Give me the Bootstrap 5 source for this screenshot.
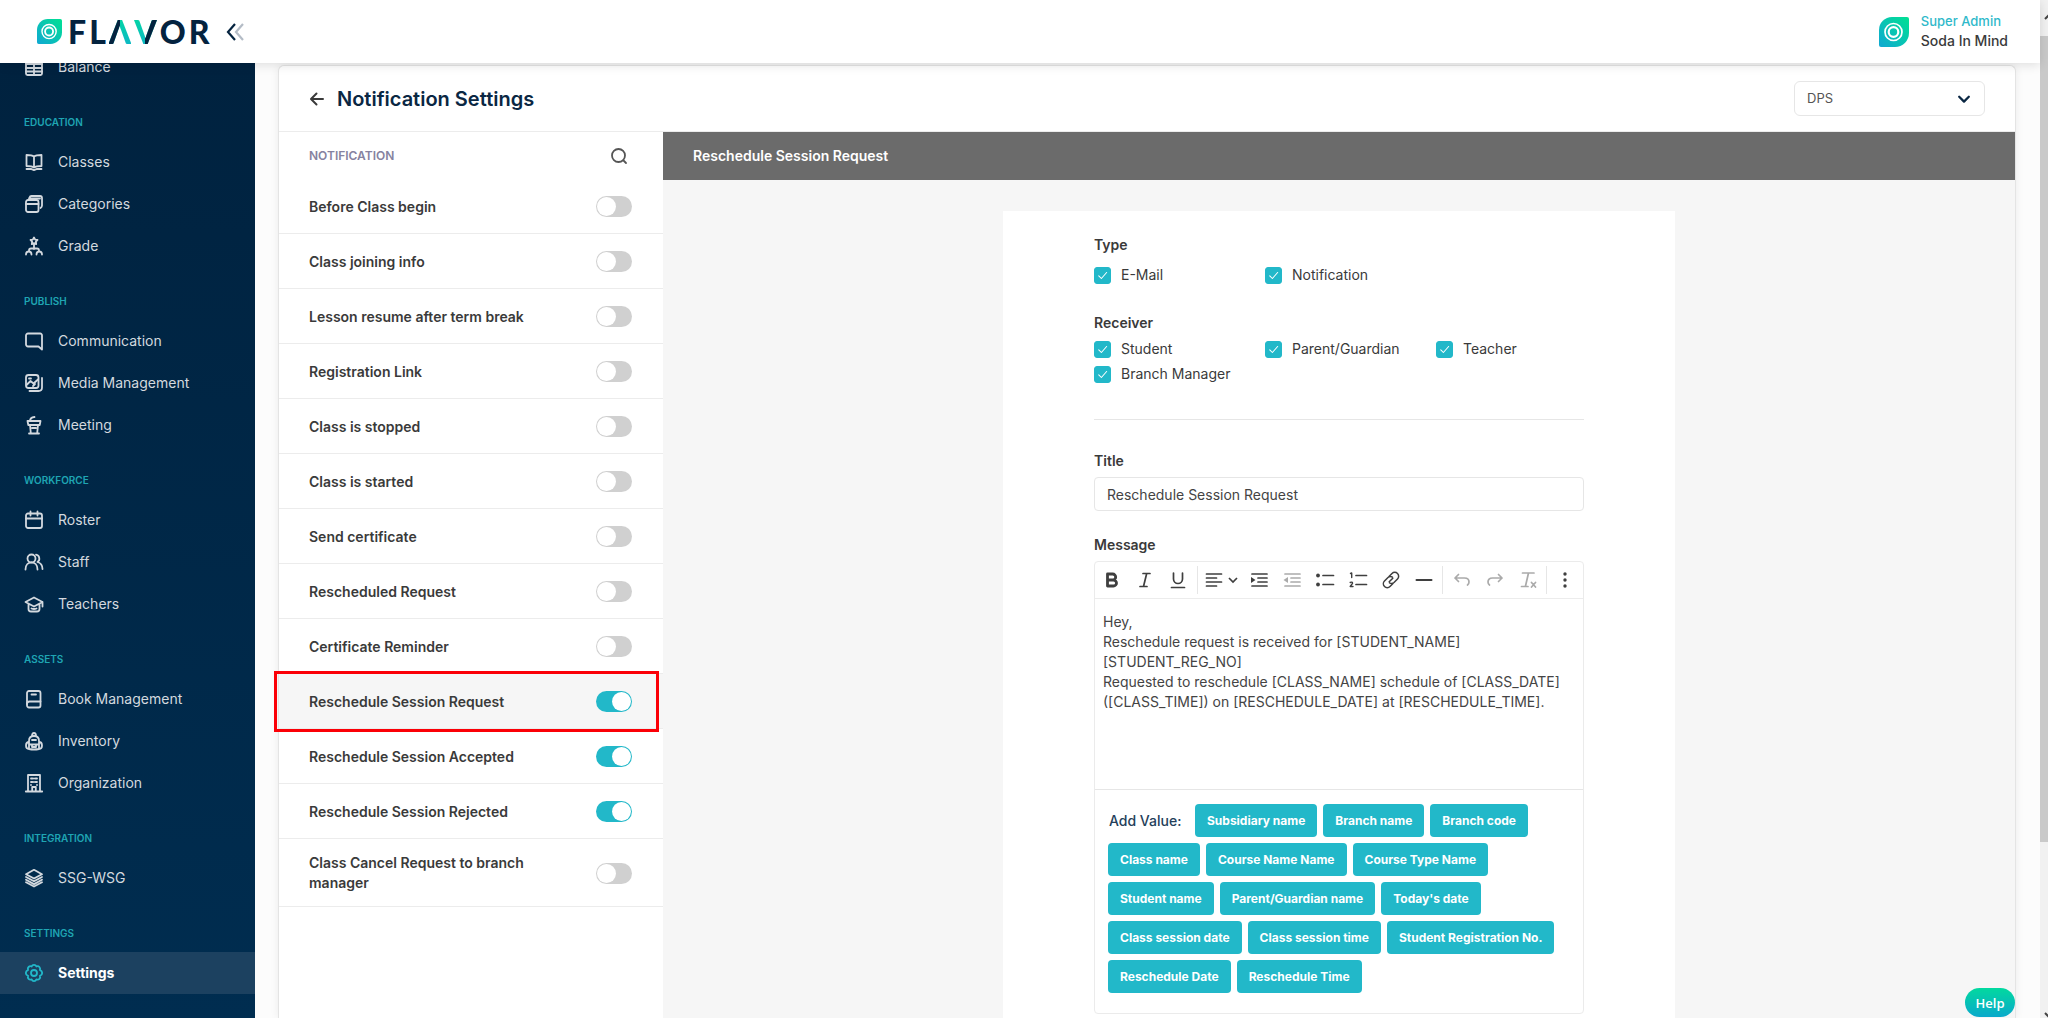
<!DOCTYPE html>
<html lang="en">
<head>
<meta charset="utf-8">
<meta name="viewport" content="width=device-width, initial-scale=1">
<title>Notification Settings</title>
<link href="https://cdn.jsdelivr.net/npm/bootstrap@5.3.0/dist/css/bootstrap.min.css" rel="stylesheet">
<style>
  :root { --teal: #22b8c9; --navy: #0a2743; --ink: #3a3a3a; --line: #ececec; }
  body { font-family: Inter, "Open Sans", sans-serif; font-size: 14px; line-height: 20px; color: var(--ink); background: #fcfcfc; }
  svg.ico { width: 20px; height: 20px; fill: none; stroke: currentColor; stroke-width: 1.8; stroke-linecap: round; stroke-linejoin: round; flex: none; }
  .pane-root { min-width: 0; min-height: 0; }

  .topbar { height: 63px; background: #fff; padding: 0 32px 0 37px; box-shadow: 0 2px 10px rgba(0,0,0,.12); z-index: 5; flex: none; }
  .brand { gap: 6px; text-decoration: none; }
  .brand-word { font-family: Lato, sans-serif; font-weight: 900; font-size: 32px; line-height: 40px; color: #04233f; gap: 3px; }
  .duo { color: transparent; -webkit-background-clip: text; background-clip: text; }
  .duo-a { background-image: linear-gradient(90deg, #04233f 50%, transparent 50%), linear-gradient(#00dc9c, #10b0cd); }
  .duo-v { background-image: linear-gradient(90deg, transparent 50%, #04233f 50%), linear-gradient(#00dc9c, #10b0cd); }
  .who-box { padding-bottom: 2px; }
  .role { color: #2fb9ca; font-size: 13px; font-weight: 500; }
  .who { font-weight: 500; }

  .side { width: 255px; flex: none; background: linear-gradient(#00223f, #002d50); overflow: hidden; }
  .side-list { margin-top: -17px; }
  .side-head { height: 53px; padding: 24px 24px 0; font-size: 10px; line-height: 20px; font-weight: 600; color: #1fa5b3; text-transform: uppercase; }
  .side-link { height: 42px; padding: 0 24px; gap: 14px; color: #d3d9df; text-decoration: none; }
  .side-link.active { background: #1c4160; color: #fff; font-weight: 700; }
  .side-link.active svg { color: var(--teal); }

  .work { padding: 2px 24px 0 23px; }
  .sheet { background: #fff; border: 1px solid #e4e4e4; border-bottom: 0; border-radius: 6px 6px 0 0; box-shadow: 0 0 8px rgba(0,0,0,.07); }
  .sheet-head { height: 66px; padding: 0 30px; border-bottom: 1px solid var(--line); flex: none; }
  .sheet-head h1 { font-size: 20px; line-height: 28px; font-weight: 600; color: var(--navy); }
  .branch-pick { width: 191px; height: 35px; padding: 0 36px 0 12px; font-size: 13px; color: #555; border-color: #e6e6e6;
    background-position: right 13px center; background-size: 14px;
    background-image: url("data:image/svg+xml,%3csvg xmlns='http://www.w3.org/2000/svg' viewBox='0 0 16 16'%3e%3cpath fill='none' stroke='%230a2743' stroke-width='2.6' stroke-linecap='round' stroke-linejoin='round' d='M2.5 5.5l5.5 5.5 5.5-5.5'/%3e%3c/svg%3e"); }

  .notes { width: 384px; flex: none; }
  .notes-head { height: 47px; padding: 0 34px 0 30px; color: #8682a0; font-size: 12px; font-weight: 600; }
  .note { min-height: 55px; padding: 14px 31px 13px 30px; border-bottom: 1px solid var(--line); font-weight: 600; }
  .note.active { background: #f6f6f6; position: relative; }
  .note.active::after { content: ""; position: absolute; inset: -3px 4px -4px -5px; border: 3px solid #fb0007; }
  .note label { width: 230px; }
  .note .form-check-input { width: 36px; height: 21px; margin: 0; flex: none; border: 0; border-radius: 11px; background-color: #d0d0d0; background-size: 21px 21px;
    background-image: url("data:image/svg+xml,%3csvg xmlns='http://www.w3.org/2000/svg' viewBox='0 0 20 20'%3e%3ccircle cx='10' cy='10' r='9' fill='%23fff'/%3e%3c/svg%3e"); }
  .note .form-check-input:checked { background-color: var(--teal);
    background-image: url("data:image/svg+xml,%3csvg xmlns='http://www.w3.org/2000/svg' viewBox='0 0 20 20'%3e%3ccircle cx='10' cy='10' r='9' fill='%23fff'/%3e%3c/svg%3e"); }

  .detail { background: #f6f6f6; }
  .detail-head { height: 48px; padding: 0 30px; background: #6b6b6b; color: #fff; font-weight: 600; font-size: 14px; line-height: 20px; }
  .paper { width: 672px; max-width: 100%; margin-top: 31px; padding: 24px 91px; background: #fff; }
  .field-name { font-size: 14px; line-height: 20px; font-weight: 600; margin: 0 0 6px; }
  .ticks .form-check { width: 171px; min-height: 0; padding: 0; gap: 10px; margin: 0; white-space: nowrap; }
  .ticks .form-check-input { width: 17px; height: 17px; margin: 0; border-radius: 3px; flex: none; }
  .ticks .form-check-input:checked { background-color: var(--teal); border-color: var(--teal);
    background-image: url("data:image/svg+xml,%3csvg xmlns='http://www.w3.org/2000/svg' viewBox='0 0 20 20'%3e%3cpath fill='none' stroke='%23fff' stroke-width='1.4' stroke-linecap='round' stroke-linejoin='round' d='M5 10.5l3.5 3.5 7-8'/%3e%3c/svg%3e"); }
  .ticks { row-gap: 5px; margin-right: -30px; }
  .rule { border-top: 1px solid #e6e6e6; margin: 35px 0 31px; }
  .title-box { height: 34px; padding: 0 12px; font-size: 14px; color: #444; border-color: #e6e6e6; border-radius: 4px; }
  .editor { border: 1px solid #ebebeb; border-radius: 4px; }
  .tools { height: 37px; border-bottom: 1px solid var(--line); padding: 0 1px; }
  .tool { width: 33px; height: 34px; padding: 0; border: 0; background: none; color: #3f3f3f; display: flex; align-items: center; justify-content: center; }
  .tool.wide { width: 43px; gap: 4px; }
  .tool:disabled { color: #aaa; }
  .tool svg { stroke-width: 1.7; }
  .bar { width: 1px; height: 28px; background: #e6e6e6; margin: 0 2px; }
  .msg { height: 191px; padding: 13px 8px; border: 0; border-bottom: 1px solid #e6e6e6; border-radius: 0; font-size: 14px; line-height: 20px; color: #444; resize: none; overflow: hidden; }
  .values { gap: 6px; padding: 14px 13px 20px; }
  .values-name { font-size: 14px; line-height: 20px; font-weight: 500; color: #24405a; width: 81px; padding-left: 1px; }
  .btn-val { height: 33px; padding: 0 12px; background: var(--teal); color: #fff; font-size: 12px; line-height: 20px; font-weight: 700; border: 0; border-radius: 4px; }

  .help { position: fixed; right: 33px; bottom: 1px; width: 50px; height: 29px; padding: 0; border: 0; border-radius: 15px; background: linear-gradient(#02d99f, #0aa9cb); color: #fff; font-family: "Open Sans", sans-serif; font-size: 13px; font-weight: 600; z-index: 6; }
  .scroll-rail { width: 8px; flex: none; background: #f1f1f1; overflow: hidden; }
  .scroll-end { height: 36px; padding-top: 5px; }
  .scroll-grip { height: 806px; background: #c9c9c9; }
</style>
<script src="https://cdn.jsdelivr.net/npm/bootstrap@5.3.0/dist/js/bootstrap.bundle.min.js"></script>
</head>
<body class="vh-100 d-flex overflow-hidden">

<svg width="0" height="0" class="position-absolute" aria-hidden="true">
  <defs>
    <linearGradient id="leaf" x1="1" y1="0" x2="0" y2="1"><stop offset="0" stop-color="#00e192"/><stop offset="1" stop-color="#10a8d3"/></linearGradient>
    <symbol id="i-mark" viewBox="0 0 30 30"><path fill="url(#leaf)" stroke="none" d="M13 0H28a2 2 0 0 1 2 2V16A14 14 0 0 1 16 30H2a2 2 0 0 1-2-2V13A13 13 0 0 1 13 0z"/><circle cx="14.500" cy="15" r="8.500" fill="none" stroke="#fff" stroke-width="1.700"/><circle cx="14.500" cy="15" r="4.800" fill="none" stroke="#fff" stroke-width="2.200"/></symbol>
    <symbol id="i-table" viewBox="0 0 20 20"><rect x="2" y="2" width="16" height="16" rx="1.500"/><path d="M2 7h16M2 11h16M2 14.500h16M10 7v11"/></symbol>
    <symbol id="i-book" viewBox="0 0 20 20"><path d="M10 4.500C8 3 5 3 2.500 3v11c2.500 0 5.500 0 7.500 1.500 2-1.500 5-1.500 7.500-1.500V3C15 3 12 3 10 4.500zM10 4.500v11M2.500 17H7c1.500 0 1.500 1 3 1s1.500-1 3-1h4.500"/></symbol>
    <symbol id="i-stack" viewBox="0 0 20 20"><rect x="2" y="6" width="12.500" height="12" rx="2"/><path d="M2 10h12.500M5 6l.5-2.500Q6 2 7.500 2H16q2 0 2 2v7.500q0 1.500-1.500 2.500M5 4.500h11"/></symbol>
    <symbol id="i-grade" viewBox="0 0 20 20"><path d="M10 1.500l1.200 2.100 2.300.4-1.600 1.700.3 2.400L10 7.100l-2.200 1 .3-2.400L6.500 4l2.300-.4zM10 8.500V13M5 14.500c0-1.500 1-2 2-2h6c1 0 2 .5 2 2M2 18.500c0-4 5.500-4 5.500 0M12.500 18.500c0-4 5.500-4 5.500 0"/></symbol>
    <symbol id="i-chat" viewBox="0 0 20 20"><path d="M4 2.500h12A1.800 1.800 0 0 1 18 4.500V18.500l-3.500-3H4a2 2 0 0 1-2-2v-9a2 2 0 0 1 2-2z"/></symbol>
    <symbol id="i-media" viewBox="0 0 20 20"><rect x="2" y="2" width="12.500" height="13" rx="2.500"/><path d="M2.500 12l4-4 3 2.500L14 6.500M5 5.500h2M9 13l2-2M18 5v9.500q0 3.500-3.500 3.500H5.500"/></symbol>
    <symbol id="i-meet" viewBox="0 0 20 20"><path d="M3.500 6h13l-.8 4H4.300zM6 10l.8 8M14 10l-.8 8M5 18.500h10M6 6q0-3.500 4.500-4M8 13h4"/></symbol>
    <symbol id="i-cal" viewBox="0 0 20 20"><rect x="2" y="3.500" width="16" height="14.500" rx="2"/><path d="M2 8.500h16M6.500 1.500v4M13.500 1.500v4"/></symbol>
    <symbol id="i-staff" viewBox="0 0 20 20"><circle cx="7.500" cy="6.500" r="4"/><path d="M1.500 17.500c0-9.500 12-9.500 12 0M12 2.700a4 4 0 0 1 1.500 7.300q5 1.500 5 7"/></symbol>
    <symbol id="i-cap" viewBox="0 0 20 20"><path d="M1.500 8L10 3.500 18.500 8 10 12.500zM4.500 10v5Q4.500 17.500 7 17.500h6q2.500 0 2.500-2.500v-5M18.500 8v4.500M7.500 14.500q2.500 1 5 0"/></symbol>
    <symbol id="i-bookm" viewBox="0 0 20 20"><rect x="3" y="2" width="13.500" height="16.500" rx="2"/><path d="M3 15q0-2.500 2.500-2.500h11M7.500 5.500h4.500"/></symbol>
    <symbol id="i-bag" viewBox="0 0 20 20"><path d="M5 18V10Q5 5 10 5t5 5v8q-5 1-10 0zM8 5q0-3 2-3t2 3M5 11q-3 0-3 3.500T5 18M15 11q3 0 3 3.500T15 18M5 13.500h10M8 9h4M8 13.500V16h4v-2.500"/></symbol>
    <symbol id="i-org" viewBox="0 0 20 20"><path d="M4 18.500V2h12v16.500M1.800 18.500h16.400M8.200 18.500v-4.500h3.600v4.500M7 5.500h1.500M11.500 5.500H13M7 9h1.500M11.500 9H13M10 5.500v0M10 9v0M7 12v0M13 12v0"/></symbol>
    <symbol id="i-layers" viewBox="0 0 20 20"><path d="M10 1.800L18 6.200 10 10.500 2 6.200zM2 9l8 4.300L18 9M2 11.800l8 4.300 8-4.300M2 14.300l8 4.200 8-4.200"/></symbol>
    <symbol id="i-gear" viewBox="0 0 20 20"><path d="M10 1.800q1.700 0 2.400 1.700 1.800-.8 3 .5t.5 2.900Q18.200 8 18.200 10t-2.300 2.900q.8 1.700-.5 3t-3 .5Q11.700 18.200 10 18.200t-2.400-1.800q-1.800.8-3-.5t-.5-3Q1.800 12 1.800 10t2.300-3.100q-.8-1.600.5-2.900t3-.5Q8.300 1.800 10 1.800z"/><circle cx="10" cy="10" r="3"/></symbol>
  </defs>
</svg>

<div class="pane-root flex-grow-1 d-flex flex-column">
  <header class="topbar d-flex align-items-center justify-content-between position-relative">
    <div class="d-flex align-items-center gap-3">
      <a href="#" class="brand d-flex align-items-center" aria-label="Flavor">
        <svg width="25" height="25"><use href="#i-mark"/></svg>
        <span class="brand-word d-flex"><span>F</span><span>L</span><span class="duo duo-a">Λ</span><span class="duo duo-v">V</span><span>O</span><span>R</span></span>
      </a>
      <button class="btn p-0 border-0 d-flex" aria-label="Collapse menu">
        <svg width="20" height="20" viewBox="0 0 20 20" fill="none" stroke-width="2.200"><path d="M10 2L3 10l7 8" stroke="#04233f"/><path d="M18 2l-7 8 7 8" stroke="#b4bcc6"/></svg>
      </button>
    </div>
    <div class="d-flex align-items-center gap-2">
      <svg width="30" height="30"><use href="#i-mark"/></svg>
      <div class="who-box ms-1"><div class="role">Super Admin</div><div class="who">Soda In Mind</div></div>
    </div>
  </header>

  <div class="pane-root d-flex flex-grow-1">
    <nav class="side" aria-label="Main">
      <div class="side-list">
        <a href="#" class="side-link d-flex align-items-center"><svg class="ico"><use href="#i-table"/></svg>Balance</a>
        <div class="side-head">Education</div>
        <a href="#" class="side-link d-flex align-items-center"><svg class="ico"><use href="#i-book"/></svg>Classes</a>
        <a href="#" class="side-link d-flex align-items-center"><svg class="ico"><use href="#i-stack"/></svg>Categories</a>
        <a href="#" class="side-link d-flex align-items-center"><svg class="ico"><use href="#i-grade"/></svg>Grade</a>
        <div class="side-head">Publish</div>
        <a href="#" class="side-link d-flex align-items-center"><svg class="ico"><use href="#i-chat"/></svg>Communication</a>
        <a href="#" class="side-link d-flex align-items-center"><svg class="ico"><use href="#i-media"/></svg>Media Management</a>
        <a href="#" class="side-link d-flex align-items-center"><svg class="ico"><use href="#i-meet"/></svg>Meeting</a>
        <div class="side-head">Workforce</div>
        <a href="#" class="side-link d-flex align-items-center"><svg class="ico"><use href="#i-cal"/></svg>Roster</a>
        <a href="#" class="side-link d-flex align-items-center"><svg class="ico"><use href="#i-staff"/></svg>Staff</a>
        <a href="#" class="side-link d-flex align-items-center"><svg class="ico"><use href="#i-cap"/></svg>Teachers</a>
        <div class="side-head">Assets</div>
        <a href="#" class="side-link d-flex align-items-center"><svg class="ico"><use href="#i-bookm"/></svg>Book Management</a>
        <a href="#" class="side-link d-flex align-items-center"><svg class="ico"><use href="#i-bag"/></svg>Inventory</a>
        <a href="#" class="side-link d-flex align-items-center"><svg class="ico"><use href="#i-org"/></svg>Organization</a>
        <div class="side-head">Integration</div>
        <a href="#" class="side-link d-flex align-items-center"><svg class="ico"><use href="#i-layers"/></svg>SSG-WSG</a>
        <div class="side-head">Settings</div>
        <a href="#" class="side-link active d-flex align-items-center" aria-current="page"><svg class="ico"><use href="#i-gear"/></svg>Settings</a>
      </div>
    </nav>

    <main class="work pane-root flex-grow-1 d-flex">
      <div class="sheet pane-root flex-grow-1 d-flex flex-column">
        <div class="sheet-head d-flex align-items-center justify-content-between">
          <div class="d-flex align-items-center gap-2">
            <button class="btn p-0 border-0 d-flex" aria-label="Back"><svg width="16" height="16" viewBox="0 0 16 16" fill="none" stroke="#3a3a3a" stroke-width="2" stroke-linecap="round" stroke-linejoin="round"><path d="M14 8H2.500M7.500 2.500L2 8l5.500 5.500"/></svg></button>
            <h1 class="m-0 ps-1">Notification Settings</h1>
          </div>
          <select class="form-select branch-pick" aria-label="Branch"><option>DPS</option></select>
        </div>
        <div class="pane-root d-flex flex-grow-1">
          <section class="notes">
            <div class="notes-head d-flex align-items-center justify-content-between">
              <span>NOTIFICATION</span>
              <button class="btn p-0 border-0 d-flex" aria-label="Search"><svg width="20" height="20" viewBox="0 0 20 20" fill="none" stroke="#555" stroke-width="1.800" stroke-linecap="round"><circle cx="9.500" cy="9.500" r="6.500"/><path d="M14.500 14.500L17 17"/></svg></button>
            </div>
            <div class="note d-flex align-items-center justify-content-between form-switch"><label for="n1">Before Class begin</label><input class="form-check-input" type="checkbox" role="switch" id="n1"></div>
            <div class="note d-flex align-items-center justify-content-between form-switch"><label for="n2">Class joining info</label><input class="form-check-input" type="checkbox" role="switch" id="n2"></div>
            <div class="note d-flex align-items-center justify-content-between form-switch"><label for="n3">Lesson resume after term break</label><input class="form-check-input" type="checkbox" role="switch" id="n3"></div>
            <div class="note d-flex align-items-center justify-content-between form-switch"><label for="n4">Registration Link</label><input class="form-check-input" type="checkbox" role="switch" id="n4"></div>
            <div class="note d-flex align-items-center justify-content-between form-switch"><label for="n5">Class is stopped</label><input class="form-check-input" type="checkbox" role="switch" id="n5"></div>
            <div class="note d-flex align-items-center justify-content-between form-switch"><label for="n6">Class is started</label><input class="form-check-input" type="checkbox" role="switch" id="n6"></div>
            <div class="note d-flex align-items-center justify-content-between form-switch"><label for="n7">Send certificate</label><input class="form-check-input" type="checkbox" role="switch" id="n7"></div>
            <div class="note d-flex align-items-center justify-content-between form-switch"><label for="n8">Rescheduled Request</label><input class="form-check-input" type="checkbox" role="switch" id="n8"></div>
            <div class="note d-flex align-items-center justify-content-between form-switch"><label for="n9">Certificate Reminder</label><input class="form-check-input" type="checkbox" role="switch" id="n9"></div>
            <div class="note active d-flex align-items-center justify-content-between form-switch"><label for="n10">Reschedule Session Request</label><input class="form-check-input" type="checkbox" role="switch" id="n10" checked></div>
            <div class="note d-flex align-items-center justify-content-between form-switch"><label for="n11">Reschedule Session Accepted</label><input class="form-check-input" type="checkbox" role="switch" id="n11" checked></div>
            <div class="note d-flex align-items-center justify-content-between form-switch"><label for="n12">Reschedule Session Rejected</label><input class="form-check-input" type="checkbox" role="switch" id="n12" checked></div>
            <div class="note d-flex align-items-center justify-content-between form-switch"><label for="n13">Class Cancel Request to branch manager</label><input class="form-check-input" type="checkbox" role="switch" id="n13"></div>
          </section>

          <section class="detail pane-root flex-grow-1 overflow-hidden">
            <h2 class="detail-head d-flex align-items-center m-0">Reschedule Session Request</h2>
            <form class="paper mx-auto">
              <p class="field-name">Type</p>
              <div class="ticks d-flex flex-wrap pt-1 mb-4">
                <div class="form-check d-flex align-items-center"><input class="form-check-input" type="checkbox" id="t1" checked><label for="t1">E-Mail</label></div>
                <div class="form-check d-flex align-items-center"><input class="form-check-input" type="checkbox" id="t2" checked><label for="t2">Notification</label></div>
              </div>
              <p class="field-name pt-1">Receiver</p>
              <div class="ticks d-flex flex-wrap">
                <div class="form-check d-flex align-items-center"><input class="form-check-input" type="checkbox" id="r1" checked><label for="r1">Student</label></div>
                <div class="form-check d-flex align-items-center"><input class="form-check-input" type="checkbox" id="r2" checked><label for="r2">Parent/Guardian</label></div>
                <div class="form-check d-flex align-items-center"><input class="form-check-input" type="checkbox" id="r3" checked><label for="r3">Teacher</label></div>
                <div class="form-check d-flex align-items-center"><input class="form-check-input" type="checkbox" id="r4" checked><label for="r4">Branch Manager</label></div>
              </div>
              <div class="rule"></div>
              <label class="field-name d-block" for="ttl">Title</label>
              <input class="form-control title-box" id="ttl" type="text" value="Reschedule Session Request">
              <label class="field-name d-block mt-4" for="msg">Message</label>
              <div class="editor">
                <div class="tools d-flex align-items-center">
                  <button type="button" class="tool" aria-label="Bold"><svg class="ico" viewBox="0 0 20 20"><path stroke-width="2.800" d="M5.500 4h5.200a2.900 2.900 0 0 1 0 6H5.500zM5.500 10h6a3 3 0 0 1 0 6h-6z"/></svg></button>
                  <button type="button" class="tool" aria-label="Italic"><svg class="ico" viewBox="0 0 20 20"><path d="M8 3.500h7M5 16.500h7M11.700 3.500l-3.200 13"/></svg></button>
                  <button type="button" class="tool" aria-label="Underline"><svg class="ico" viewBox="0 0 20 20"><path d="M5.500 3v6a4.500 4.500 0 0 0 9 0V3M3.500 17.500h13"/></svg></button>
                  <span class="bar"></span>
                  <button type="button" class="tool wide" aria-label="Alignment"><svg class="ico" viewBox="0 0 20 20"><path d="M2.500 4h15M2.500 8h10M2.500 12h15M2.500 16h10"/></svg><svg width="10" height="10" viewBox="0 0 10 10" fill="none" stroke="currentColor" stroke-width="1.700"><path d="M1 3l4 4 4-4"/></svg></button>
                  <button type="button" class="tool" aria-label="Increase indent"><svg class="ico" viewBox="0 0 20 20"><path d="M3 4h15M9 8h9M9 12h9M3 16h15"/><path fill="currentColor" stroke="none" d="M2 7l4.500 3L2 13z"/></svg></button>
                  <button type="button" class="tool" aria-label="Decrease indent" disabled><svg class="ico" viewBox="0 0 20 20"><path d="M3 4h15M9 8h9M9 12h9M3 16h15"/><path fill="currentColor" stroke="none" d="M6 7l-4.500 3L6 13z"/></svg></button>
                  <button type="button" class="tool" aria-label="Bulleted list"><svg class="ico" viewBox="0 0 20 20"><path d="M8 5.500h10.500M8 14.500h10.500"/><circle cx="3" cy="5.500" r="1.900" fill="currentColor" stroke="none"/><circle cx="3" cy="14.500" r="1.900" fill="currentColor" stroke="none"/></svg></button>
                  <button type="button" class="tool" aria-label="Numbered list"><svg class="ico" viewBox="0 0 20 20"><path d="M8 5.500h10.500M8 14.500h10.500"/><path stroke-width="1.400" d="M2.500 3.500L3.700 3v4.500M2.200 12.500q2.500-1 2.300.8L2.200 16.500h2.800"/></svg></button>
                  <button type="button" class="tool" aria-label="Link"><svg class="ico" viewBox="0 0 20 20"><path stroke-width="1.500" d="M8 6.500l3-3a3.700 3.700 0 0 1 5.500 5.500L13 12.500q-2 1.700-4.500.3M12 13.500l-3 3A3.700 3.700 0 0 1 3.500 11L7 7.500q2-1.700 4.500-.3M8.200 11.800l3.600-3.600"/></svg></button>
                  <button type="button" class="tool" aria-label="Horizontal line"><svg class="ico" viewBox="0 0 20 20"><path stroke-width="2" d="M2.500 10h15"/></svg></button>
                  <span class="bar"></span>
                  <button type="button" class="tool" aria-label="Undo" disabled><svg class="ico" viewBox="0 0 20 20"><path d="M6.500 4.500L3 8l3.500 3.500M3 8h9.500q4.500 0 4.500 4 0 2-1.500 3"/></svg></button>
                  <button type="button" class="tool" aria-label="Redo" disabled><svg class="ico" viewBox="0 0 20 20"><path d="M13.500 4.500L17 8l-3.500 3.500M17 8H7.500Q3 8 3 12q0 2 1.500 3"/></svg></button>
                  <button type="button" class="tool" aria-label="Remove format" disabled><svg class="ico" viewBox="0 0 20 20"><path d="M4.500 3h11.500M10.500 3L7.500 16M3.500 16.500h6.500M13.500 12.500l4 4.500M17.500 12.500l-4 4.500"/></svg></button>
                  <span class="bar"></span>
                  <button type="button" class="tool" aria-label="More"><svg class="ico" viewBox="0 0 20 20"><g fill="currentColor" stroke="none"><circle cx="9" cy="4" r="1.700"/><circle cx="9" cy="10" r="1.700"/><circle cx="9" cy="16" r="1.700"/></g></svg></button>
                </div>
                <textarea class="form-control msg" id="msg">Hey,
Reschedule request is received for [STUDENT_NAME]
[STUDENT_REG_NO]
Requested to reschedule [CLASS_NAME] schedule of [CLASS_DATE]
([CLASS_TIME]) on [RESCHEDULE_DATE] at [RESCHEDULE_TIME].</textarea>
                <div class="values d-flex flex-wrap align-items-center">
                  <span class="values-name">Add Value:</span>
                  <button type="button" class="btn btn-val">Subsidiary name</button>
                  <button type="button" class="btn btn-val">Branch name</button>
                  <button type="button" class="btn btn-val">Branch code</button>
                  <button type="button" class="btn btn-val">Class name</button>
                  <button type="button" class="btn btn-val">Course Name Name</button>
                  <button type="button" class="btn btn-val">Course Type Name</button>
                  <button type="button" class="btn btn-val">Student name</button>
                  <button type="button" class="btn btn-val">Parent/Guardian name</button>
                  <button type="button" class="btn btn-val">Today's date</button>
                  <button type="button" class="btn btn-val">Class session date</button>
                  <button type="button" class="btn btn-val">Class session time</button>
                  <button type="button" class="btn btn-val">Student Registration No.</button>
                  <button type="button" class="btn btn-val">Reschedule Date</button>
                  <button type="button" class="btn btn-val">Reschedule Time</button>
                </div>
              </div>
            </form>
          </section>
        </div>
      </div>
    </main>
  </div>
</div>

<div class="scroll-rail d-flex flex-column" aria-hidden="true">
  <div class="scroll-end"><svg width="16" height="8" viewBox="0 0 16 8" fill="none" stroke="#444" stroke-width="2"><path d="M5 7l4-4 4 4"/></svg></div>
  <div class="scroll-grip"></div>
  <svg class="mt-auto" width="16" height="6" viewBox="0 0 16 6" fill="none" stroke="#444" stroke-width="2"><path d="M5 1l4 4 4-4"/></svg>
</div>
<button class="help">Help</button>
</body>
</html>
